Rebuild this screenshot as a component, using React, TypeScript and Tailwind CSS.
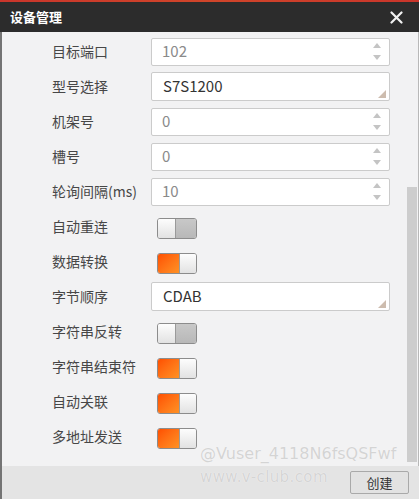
import React from 'react';

type Row =
    | { kind: 'spin'; label: string; value: string }
    | { kind: 'select'; label: string; value: string }
    | { kind: 'toggle'; label: string; on: boolean };

const ROWS: Row[] = [
    { kind: 'spin', label: '目标端口', value: '102' },
    { kind: 'select', label: '型号选择', value: 'S7S1200' },
    { kind: 'spin', label: '机架号', value: '0' },
    { kind: 'spin', label: '槽号', value: '0' },
    { kind: 'spin', label: '轮询间隔(ms)', value: '10' },
    { kind: 'toggle', label: '自动重连', on: false },
    { kind: 'toggle', label: '数据转换', on: true },
    { kind: 'select', label: '字节顺序', value: 'CDAB' },
    { kind: 'toggle', label: '字符串反转', on: false },
    { kind: 'toggle', label: '字符串结束符', on: true },
    { kind: 'toggle', label: '自动关联', on: true },
    { kind: 'toggle', label: '多地址发送', on: true },
];

function SpinBox({ value }: { value: string }) {
    return (
        <div className="flex h-[28px] w-[239px] items-center justify-between rounded-[2px] border border-[#cbcbcb] bg-white pl-[10px] pr-[8px]">
            <span className="text-[15px] text-[#8a8a8a]">{value}</span>
            <div className="flex flex-col gap-[7px]">
                <svg width="8" height="5" viewBox="0 0 8 5"><polygon points="4,0 8,5 0,5" fill="#c4c4c4" /></svg>
                <svg width="8" height="5" viewBox="0 0 8 5"><polygon points="0,0 8,0 4,5" fill="#c4c4c4" /></svg>
            </div>
        </div>
    );
}

function SelectBox({ value }: { value: string }) {
    return (
        <div className="flex h-[29px] w-[239px] items-center justify-between rounded-[2px] border border-[#cbcbcb] bg-white pl-[11px] pr-[3px]">
            <span className="text-[15px] text-[#333]">{value}</span>
            <svg width="8" height="8" viewBox="0 0 8 8" className="mt-[14px]"><polygon points="8,0 8,8 0,8" fill="#cdbcae" /></svg>
        </div>
    );
}

function Toggle({ on }: { on: boolean }) {
    return (
        <div className="ml-[6px] mt-[4px] flex h-[21px] w-[40px] overflow-hidden rounded-[3px] border border-[#8c8c8c]">
            {on ? (
                <>
                    <div className="w-[21px] bg-gradient-to-br from-[#ff4e00] to-[#ff9124]" />
                    <div className="flex-1 border-l border-[#9a9a9a] bg-gradient-to-b from-[#fdfdfd] to-[#e2e2e2]" />
                </>
            ) : (
                <>
                    <div className="w-[18px] border-r border-[#9a9a9a] bg-gradient-to-b from-[#fdfdfd] to-[#e2e2e2]" />
                    <div className="flex-1 bg-gradient-to-b from-[#c8c8c8] to-[#b8b8b8]" />
                </>
            )}
        </div>
    );
}

export default function App() {
    return (
        <div className="relative flex h-[499px] w-[419px] flex-col overflow-hidden bg-[#f2f2f3] font-['Noto_Sans_CJK_SC',sans-serif]">
            {/* Title bar */}
            <div className="h-[2px] bg-gradient-to-r from-[#c9352b] via-[#d0452a] to-[#c9352b]" />
            <div className="flex h-[30px] items-center justify-between bg-[#2c2c2c] pl-[10px] pr-[16px]">
                <span className="text-[13px] font-bold text-white">设备管理</span>
                <svg width="13" height="13" viewBox="0 0 13 13">
                    <path d="M1.5 1.5 L11.5 11.5 M11.5 1.5 L1.5 11.5" stroke="#f2f2f2" strokeWidth="2.2" strokeLinecap="round" />
                </svg>
            </div>

            {/* Body */}
            <div className="flex flex-1 border-l-2 border-r border-l-[#747474] border-r-[#b8b8b8]">
                <div className="flex flex-1 flex-col pl-[50px] pt-[2px]">
                    {ROWS.map((row) => (
                        <div key={row.label} className="flex h-[35px] items-center">
                            <span className="w-[99px] text-[14px] text-[#474747]">{row.label}</span>
                            {row.kind === 'spin' && <SpinBox value={row.value} />}
                            {row.kind === 'select' && <SelectBox value={row.value} />}
                            {row.kind === 'toggle' && <Toggle on={row.on} />}
                        </div>
                    ))}
                </div>
                {/* Scrollbar */}
                <div className="flex w-[10px] flex-col pt-[155px] pb-[4px] mr-[1px]">
                    <div className="flex-1 bg-[#cdcdcd]" />
                </div>
            </div>

            {/* Footer */}
            <div className="flex h-[33px] items-center justify-end border-l-2 border-[#747474] bg-[#e4e4e4] pr-[10px]">
                <button className="flex h-[23px] w-[59px] items-center justify-center rounded-[2px] border border-[#a9a9a9] bg-[#e2e2e2] text-[13px] text-[#333]">
                    创建
                </button>
            </div>

            {/* Watermark */}
            <div className="pointer-events-none absolute left-[200px] top-[446px] flex flex-col font-['DejaVu_Sans',sans-serif] leading-none text-[#d4d4d4] [text-shadow:0_0_1px_#ffffff]">
                <span className="text-[16px]">@Vuser_4118N6fsQSFwf</span>
                <span className="mt-[8px] text-[15px] tracking-[0.4px]">www.v-club.com</span>
            </div>
        </div>
    );
}
